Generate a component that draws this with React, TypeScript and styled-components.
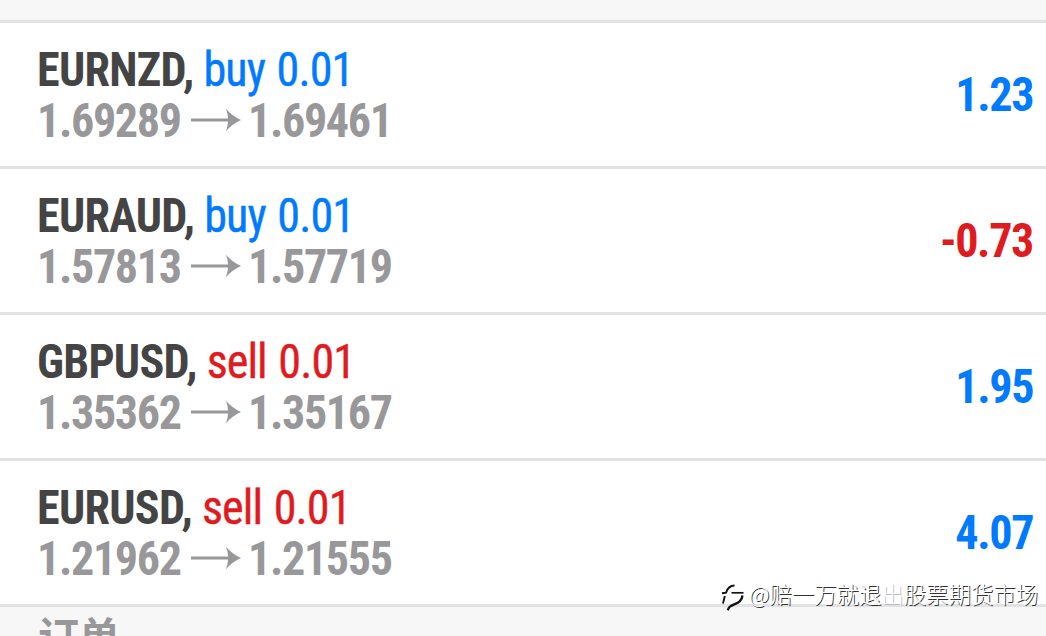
import React from 'react';
import styled, { createGlobalStyle } from 'styled-components';

const blue = '#007aff';
const red = '#e01b1f';

const GlobalStyle = createGlobalStyle`
  * { box-sizing: border-box; }
  body {
    margin: 0;
    background: #f7f7f7;
    overflow: hidden;
    font-family: 'Roboto Condensed', Roboto, 'Noto Sans CJK SC', sans-serif;
  }
`;

const Screen = styled.main`
  position: relative;
  display: flex;
  flex-direction: column;
  width: 1046px;
  height: 636px;
  overflow: hidden;
  background: #f7f7f7;
`;

const HeaderStrip = styled.div`
  flex: none;
  height: 23px;
  border-bottom: 3px solid #e2e2e4;
`;

const PositionRow = styled.article`
  flex: none;
  display: flex;
  justify-content: space-between;
  align-items: center;
  height: 146px;
  padding: 0 13px 0 37px;
  border-bottom: 3px solid #e2e2e4;
  background: #fff;
  font-size: 48px;
  line-height: 51px;
  white-space: nowrap;
`;

const Details = styled.div`
  padding-top: 1px;
`;

const Title = styled.div`
  width: max-content;
  color: #444;
  font-weight: 700;
  letter-spacing: -0.75px;
  transform: scaleX(0.96);
  transform-origin: left;
`;

const Order = styled.span<{ $color: string }>`
  color: ${(p) => p.$color};
  font-weight: 400;
  letter-spacing: -0.95px;
  word-spacing: 2px;
  -webkit-text-stroke: 0.4px ${(p) => p.$color};
`;

const Prices = styled.div`
  display: grid;
  grid-template-columns: 154px 50px 160px;
  align-items: center;
  color: #98989a;
  font-weight: 700;
`;

const Price = styled.span<{ $indent?: number }>`
  width: max-content;
  margin-left: ${(p) => p.$indent ?? 0}px;
  letter-spacing: -1.4px;
  transform: scaleX(0.96);
  transform-origin: left;
`;

const Profit = styled.div<{ $color: string }>`
  color: ${(p) => p.$color};
  font-weight: 700;
  letter-spacing: -1.4px;
  transform: scaleX(0.96);
  transform-origin: right;
`;

const SectionTitle = styled.h2`
  margin: 0;
  padding: 2px 0 0 38px;
  color: #98989a;
  font: 700 41px/50px 'Noto Sans CJK SC', sans-serif;
`;

const Watermark = styled.div`
  position: absolute;
  left: 718px;
  top: 580px;
  display: flex;
  align-items: center;
  height: 32px;
  color: #fff;
  font: 300 22.4px/32px 'Noto Sans CJK SC', sans-serif;
  text-shadow: 1px 1px 0.5px #333;
  white-space: nowrap;
`;

const Handle = styled.span`
  margin: -7px 0 0 4px;
`;

const Faint = styled.span`
  text-shadow: 1px 1px 0.5px #bbb;
`;

const ArrowIcon = styled.svg`
  margin-top: -2px;
`;

const Arrow = () => (
  <ArrowIcon width="50" height="24" viewBox="0 0 50 24">
    <path d="M0 10.5H37Q36.8 5.5 35 0.8Q41 8 50 12Q41 16 35 23.2Q36.8 18.5 37 13.5H0Z" fill="#98989a" />
  </ArrowIcon>
);

const BrandMark = () => (
  <svg width="27" height="32" viewBox="0 0 27 32" fill="none" stroke="#111">
    <path d="M4 13.2L8 12.7C9.5 8 12 5.5 16.5 5.5" strokeWidth="2" />
    <path d="M6.8 16L5 23.5" strokeWidth="1.9" />
    <path d="M13.5 12.8H25.5" strokeWidth="1.7" />
    <path d="M24.5 15.5C23.5 24 16 23 11.5 27Q10.3 28.2 9.8 30.3" strokeWidth="2.3" />
  </svg>
);

type Position = {
  symbol: string;
  side: 'buy' | 'sell';
  open: string;
  current: string;
  profit: string;
};

const positions: Position[] = [
  { symbol: 'EURNZD', side: 'buy', open: '1.69289', current: '1.69461', profit: '1.23' },
  { symbol: 'EURAUD', side: 'buy', open: '1.57813', current: '1.57719', profit: '-0.73' },
  { symbol: 'GBPUSD', side: 'sell', open: '1.35362', current: '1.35167', profit: '1.95' },
  { symbol: 'EURUSD', side: 'sell', open: '1.21962', current: '1.21555', profit: '4.07' },
];

export default function App() {
  return (
    <Screen>
      <GlobalStyle />
      <HeaderStrip />
      {positions.map((p) => (
        <PositionRow key={p.symbol}>
          <Details>
            <Title>
              {p.symbol}, <Order $color={p.side === 'buy' ? blue : red}>{p.side} 0.01</Order>
            </Title>
            <Prices>
              <Price>{p.open}</Price>
              <Arrow />
              <Price $indent={7}>{p.current}</Price>
            </Prices>
          </Details>
          <Profit $color={p.profit.startsWith('-') ? red : blue}>{p.profit}</Profit>
        </PositionRow>
      ))}
      <SectionTitle>订单</SectionTitle>
      <Watermark>
        <BrandMark />
        <Handle>
          @赔一万就退<Faint>出</Faint>股票期货市场
        </Handle>
      </Watermark>
    </Screen>
  );
}
